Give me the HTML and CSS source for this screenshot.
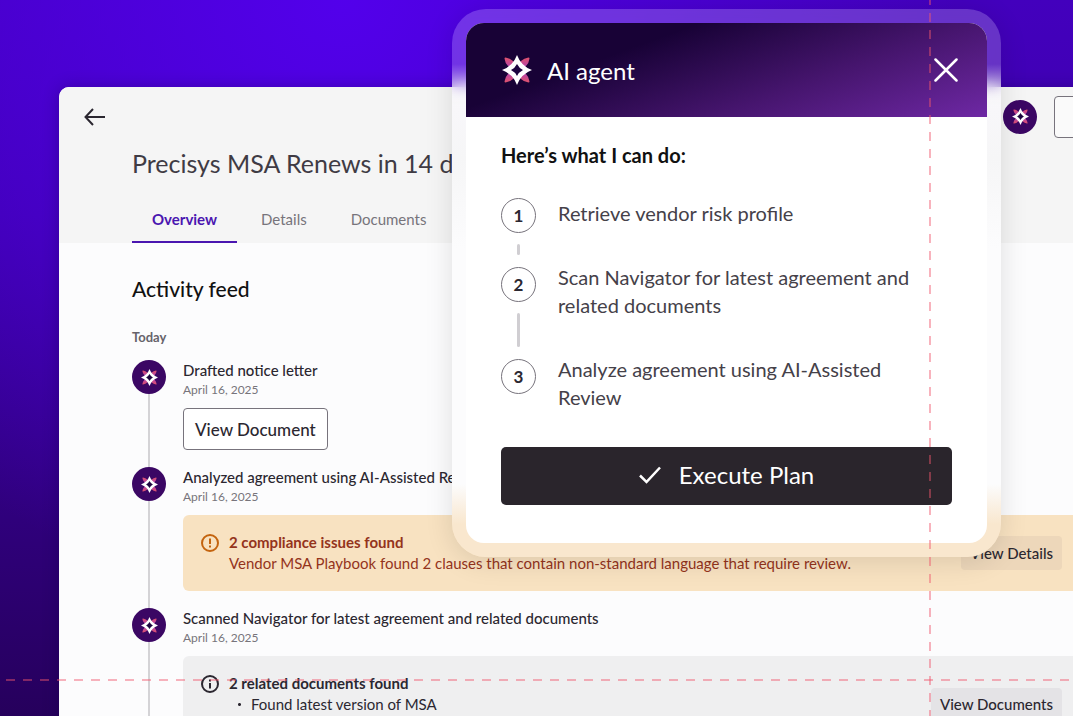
FILE: index.html
```html
<!DOCTYPE html>
<html lang="en">

<head>
    <meta charset="UTF-8">
    <meta name="viewport" content="width=device-width, initial-scale=1.0">
    <title>Precisys MSA</title>
    <link rel="stylesheet" href="styles.css">
</head>

<body>
    <!-- shared star logo -->
    <svg class="defs" width="0" height="0" aria-hidden="true">
        <defs>
            <linearGradient id="petal" x1="0" y1="0" x2="0" y2="1">
                <stop offset="0" stop-color="#e0526a" />
                <stop offset="0.5" stop-color="#a63fc0" />
                <stop offset="1" stop-color="#e0526a" />
            </linearGradient>
            <symbol id="star" viewBox="0 0 30 30">
                <path fill="url(#petal)" d="M2.500 3.500Q2.500 2.500 3.500 2.500Q8 3 11 6L15 15L19 6Q22 3 26.500 2.500Q27.500 2.500 27.500 3.500Q27 8 24 11L15 15L24 19Q27 22 27.500 26.500Q27.500 27.500 26.500 27.500Q22 27 19 24L15 15L11 24Q8 27 3.500 27.500Q2.500 27.500 2.500 26.500Q3 22 6 19L15 15L6 11Q3 8 2.500 3.500Z" />
                <path fill="#fff" d="M15 0Q19 11 30 15Q19 19 15 30Q11 19 0 15Q11 11 15 0Z" />
                <path fill="#1d0540" d="M15 9Q17 13 21 15Q17 17 15 21Q13 17 9 15Q13 13 15 9Z" />
            </symbol>
        </defs>
    </svg>

    <div class="stage">
        <main class="window">
            <header class="window-header">
                <div class="toolbar">
                    <button class="icon-button" aria-label="Back">
                        <svg width="22" height="18" viewBox="0 0 22 18" fill="none" stroke="#2b2730" stroke-width="2">
                            <path d="M21 9H1.500M9 1L1.500 9L9 17" />
                        </svg>
                    </button>
                    <div class="toolbar-actions">
                        <button class="avatar" aria-label="Open AI agent"><svg><use href="#star" /></svg></button>
                        <button class="outline-button more" aria-label="More"></button>
                    </div>
                </div>
                <h1>Precisys MSA Renews in 14 days</h1>
                <nav class="tabs">
                    <a href="#" class="tab active">Overview</a>
                    <a href="#" class="tab">Details</a>
                    <a href="#" class="tab">Documents</a>
                </nav>
            </header>

            <section class="feed">
                <h2>Activity feed</h2>
                <h3>Today</h3>
                <ul class="feed-list">
                    <li class="feed-item">
                        <span class="avatar"><svg><use href="#star" /></svg></span>
                        <div class="feed-body">
                            <p class="feed-title">Drafted notice letter</p>
                            <p class="feed-date">April 16, 2025</p>
                            <button class="outline-button">View Document</button>
                        </div>
                    </li>
                    <li class="feed-item">
                        <span class="avatar"><svg><use href="#star" /></svg></span>
                        <div class="feed-body">
                            <p class="feed-title">Analyzed agreement using AI-Assisted Review</p>
                            <p class="feed-date">April 16, 2025</p>
                            <div class="card warning">
                                <svg class="card-icon" viewBox="0 0 18 18" fill="none" stroke="currentColor" stroke-width="2">
                                    <circle cx="9" cy="9" r="8" />
                                    <path d="M9 4.500V10M9 11.500V13.500" />
                                </svg>
                                <div class="card-text">
                                    <strong>2 compliance issues found</strong>
                                    <p>Vendor MSA Playbook found 2 clauses that contain non-standard language that require review.</p>
                                </div>
                                <button class="soft-button">View Details</button>
                            </div>
                        </div>
                    </li>
                    <li class="feed-item">
                        <span class="avatar"><svg><use href="#star" /></svg></span>
                        <div class="feed-body">
                            <p class="feed-title">Scanned Navigator for latest agreement and related documents</p>
                            <p class="feed-date">April 16, 2025</p>
                            <div class="card info">
                                <svg class="card-icon" viewBox="0 0 18 18" fill="none" stroke="currentColor" stroke-width="2">
                                    <circle cx="9" cy="9" r="8" />
                                    <path d="M9 4.500V6.500M9 8V13.500" />
                                </svg>
                                <div class="card-text">
                                    <strong>2 related documents found</strong>
                                    <ul>
                                        <li>Found latest version of MSA</li>
                                    </ul>
                                </div>
                                <button class="soft-button">View Documents</button>
                            </div>
                        </div>
                    </li>
                </ul>
            </section>
        </main>

        <!-- AI agent dialog, floats over the window -->
        <div class="agent-frame">
            <section class="agent" role="dialog" aria-labelledby="agent-name">
                <header class="agent-header">
                    <svg class="agent-logo"><use href="#star" /></svg>
                    <h2 id="agent-name">AI agent</h2>
                    <button class="icon-button" aria-label="Close">
                        <svg width="24" height="24" viewBox="0 0 24 24" fill="none" stroke="#fff" stroke-width="2.500" stroke-linecap="round">
                            <path d="M1.500 1.500L22.500 22.500M22.500 1.500L1.500 22.500" />
                        </svg>
                    </button>
                </header>
                <div class="agent-body">
                    <h3>Here’s what I can do:</h3>
                    <ol class="steps">
                        <li class="step">
                            <div class="marker"><span>1</span></div>
                            <p>Retrieve vendor risk profile</p>
                        </li>
                        <li class="step">
                            <div class="marker"><span>2</span></div>
                            <p>Scan Navigator for latest agreement and related documents</p>
                        </li>
                        <li class="step">
                            <div class="marker"><span>3</span></div>
                            <p>Analyze agreement using AI-Assisted Review</p>
                        </li>
                    </ol>
                    <button class="execute">
                        <svg width="22" height="18" viewBox="0 0 22 18" fill="none" stroke="#fff" stroke-width="2.500">
                            <path d="M1 9.500L7.500 16L21 1.500" />
                        </svg>
                        Execute Plan
                    </button>
                </div>
            </section>
        </div>

        <!-- dashed guides -->
        <div class="guide guide-x"></div>
        <div class="guide guide-y"></div>
    </div>
</body>

</html>
```
FILE: styles.css
```css
* {
    margin: 0;
    padding: 0;
    box-sizing: border-box;
}

body {
    font-family: Lato, "Liberation Sans", sans-serif;
    color: #2b2730;
}

button {
    font: inherit;
    color: inherit;
    background: none;
    border: none;
    cursor: pointer;
}

ul,
ol {
    list-style: none;
}

.defs {
    position: absolute;
}

.stage {
    position: relative;
    height: 100vh;
    overflow: hidden;
    padding: 87px 0 0 59px;
    background:
        radial-gradient(circle at 32% 0, rgba(84, 0, 240, 0.9), rgba(76, 0, 215, 0) 60%),
        linear-gradient(#4300bd, #3d00ac 30%, #26005c);
}

/* window */

.window {
    min-height: 100%;
    margin-right: -32px;
    border-radius: 10px 0 0 0;
    background-color: #fcfcfd;
    overflow: hidden;
    box-shadow: 0 0 16px rgba(20, 0, 60, 0.3);
}

.window-header {
    height: 156px;
    background-color: #f5f5f5;
}

.toolbar {
    display: flex;
    justify-content: space-between;
    align-items: center;
    height: 59px;
    padding-left: 25px;
}

.toolbar-actions {
    display: flex;
    align-items: center;
    gap: 17px;
}

.icon-button {
    display: flex;
}

.avatar {
    display: flex;
    flex: none;
    justify-content: center;
    align-items: center;
    width: 34px;
    height: 34px;
    border-radius: 50%;
    background-color: #3b0764;
}

.avatar svg {
    width: 17px;
    height: 17px;
}

.outline-button {
    height: 42px;
    padding: 0 11px;
    border: 1px solid #77737c;
    border-radius: 4px;
    background-color: #fff;
    font-size: 17px;
    font-weight: 500;
}

.more {
    width: 51px;
    background-color: #fafafa;
}

h1 {
    padding-left: 73px;
    font-size: 25px;
    font-weight: 400;
    line-height: 35px;
    color: #3f3b44;
}

.tabs {
    display: flex;
    gap: 4px;
    margin-top: 14px;
    padding-left: 73px;
}

.tab {
    height: 48px;
    padding: 0 20px;
    font-size: 15px;
    line-height: 48px;
    color: #77747b;
    text-decoration: none;
}

.tab.active {
    border-bottom: 2px solid #4a16b0;
    color: #4a16b0;
    font-weight: 700;
}

/* feed */

.feed {
    padding: 32px 25px 0 73px;
}

.feed h2 {
    font-size: 21px;
    font-weight: 500;
    line-height: 28px;
    color: #111;
}

.feed h3 {
    margin: 24px 0 13px;
    font-size: 13px;
    font-weight: 700;
    line-height: 20px;
    color: #66636a;
}

.feed-item {
    display: flex;
    gap: 17px;
    padding-bottom: 17px;
    background: linear-gradient(#d4d3d6, #d4d3d6) 16px 0 / 2px 100% no-repeat;
}

.feed-body {
    flex: 1;
}

.feed-title {
    font-size: 15px;
    font-weight: 500;
    line-height: 20px;
}

.feed-date {
    margin-bottom: 8px;
    font-size: 12px;
    line-height: 20px;
    color: #77747b;
}

.card {
    display: flex;
    align-items: center;
    padding: 17px 18px;
    border-radius: 6px;
    font-size: 15px;
    line-height: 21px;
}

.card-icon {
    align-self: flex-start;
    flex: none;
    width: 18px;
    height: 18px;
    margin: 2px 10px 0 0;
}

.card-text {
    flex: 1;
    white-space: nowrap;
}

.warning {
    background-color: #f8e2c1;
    color: #94341c;
}

.warning .card-icon {
    color: #c4640f;
}

.info {
    min-height: 97px;
    background-color: #efeff0;
}

.info .card-text {
    align-self: flex-start;
}

.info li {
    padding-left: 22px;
    background: radial-gradient(circle, #2b2730 1px, transparent 2px) 8px 8px / 5px 5px no-repeat;
}

.soft-button {
    height: 34px;
    padding: 0 9px;
    border-radius: 4px;
    background-color: rgba(30, 20, 50, 0.05);
    color: #2b2730;
    font-size: 15px;
    font-weight: 500;
}

/* agent dialog */

.agent-frame {
    position: absolute;
    top: 9px;
    right: 72px;
    width: 549px;
    padding: 14px;
    border-radius: 34px;
    background: linear-gradient(rgba(255, 255, 255, 0.2) 55px, #f8f7fa 100px, #f6f6f7 150px, #fcfcfd 240px, #fcfcfd 475px, #f9e7ce 515px);
    backdrop-filter: blur(8px);
    box-shadow: 0 4px 28px rgba(0, 0, 0, 0.12);
}

.agent {
    border-radius: 18px;
    background-color: #fff;
    overflow: hidden;
}

.agent-header {
    display: flex;
    align-items: center;
    height: 94px;
    padding: 0 29px 0 36px;
    background: linear-gradient(160deg, #180236 30%, #46156e 65%, #6e28a4);
    color: #fff;
}

.agent-logo {
    width: 30px;
    height: 30px;
}

.agent-header h2 {
    flex: 1;
    margin-left: 15px;
    font-size: 24px;
    font-weight: 400;
}

.agent-body {
    padding: 26px 35px 38px;
}

.agent-body h3 {
    margin-bottom: 27px;
    font-size: 20px;
    font-weight: 700;
    line-height: 24px;
    color: #111;
}

.step {
    display: flex;
    gap: 22px;
}

.step p {
    padding: 0 20px 36px 0;
    font-size: 20px;
    line-height: 28px;
    color: #454149;
}

.step:first-child p {
    padding-top: 5px;
}

.marker {
    display: flex;
    flex-direction: column;
    align-items: center;
}

.marker span {
    width: 35px;
    height: 35px;
    margin-top: 4px;
    border: 1px solid #77737c;
    border-radius: 50%;
    font-size: 17px;
    font-weight: 700;
    line-height: 33px;
    text-align: center;
}

.marker::after {
    content: "";
    flex: 1;
    width: 3px;
    margin: 11px 0 8px;
    border-radius: 2px;
    background-color: #d0ced2;
}

.step:last-child .marker::after {
    display: none;
}

.execute {
    display: flex;
    justify-content: center;
    align-items: center;
    gap: 18px;
    width: 100%;
    height: 58px;
    padding-bottom: 3px;
    border-radius: 5px;
    background-color: #2a252c;
    color: #fff;
    font-size: 24px;
}

/* guides */

.guide {
    position: absolute;
    opacity: 0.45;
    pointer-events: none;
}

.guide-x {
    left: 6px;
    right: 0;
    top: 679px;
    height: 2px;
    background: repeating-linear-gradient(90deg, #f0566c 0 9px, transparent 9px 17px);
}

.guide-y {
    top: -4px;
    bottom: 0;
    right: 142px;
    width: 2px;
    background: repeating-linear-gradient(#f0566c 0 9px, transparent 9px 17px);
}
```
